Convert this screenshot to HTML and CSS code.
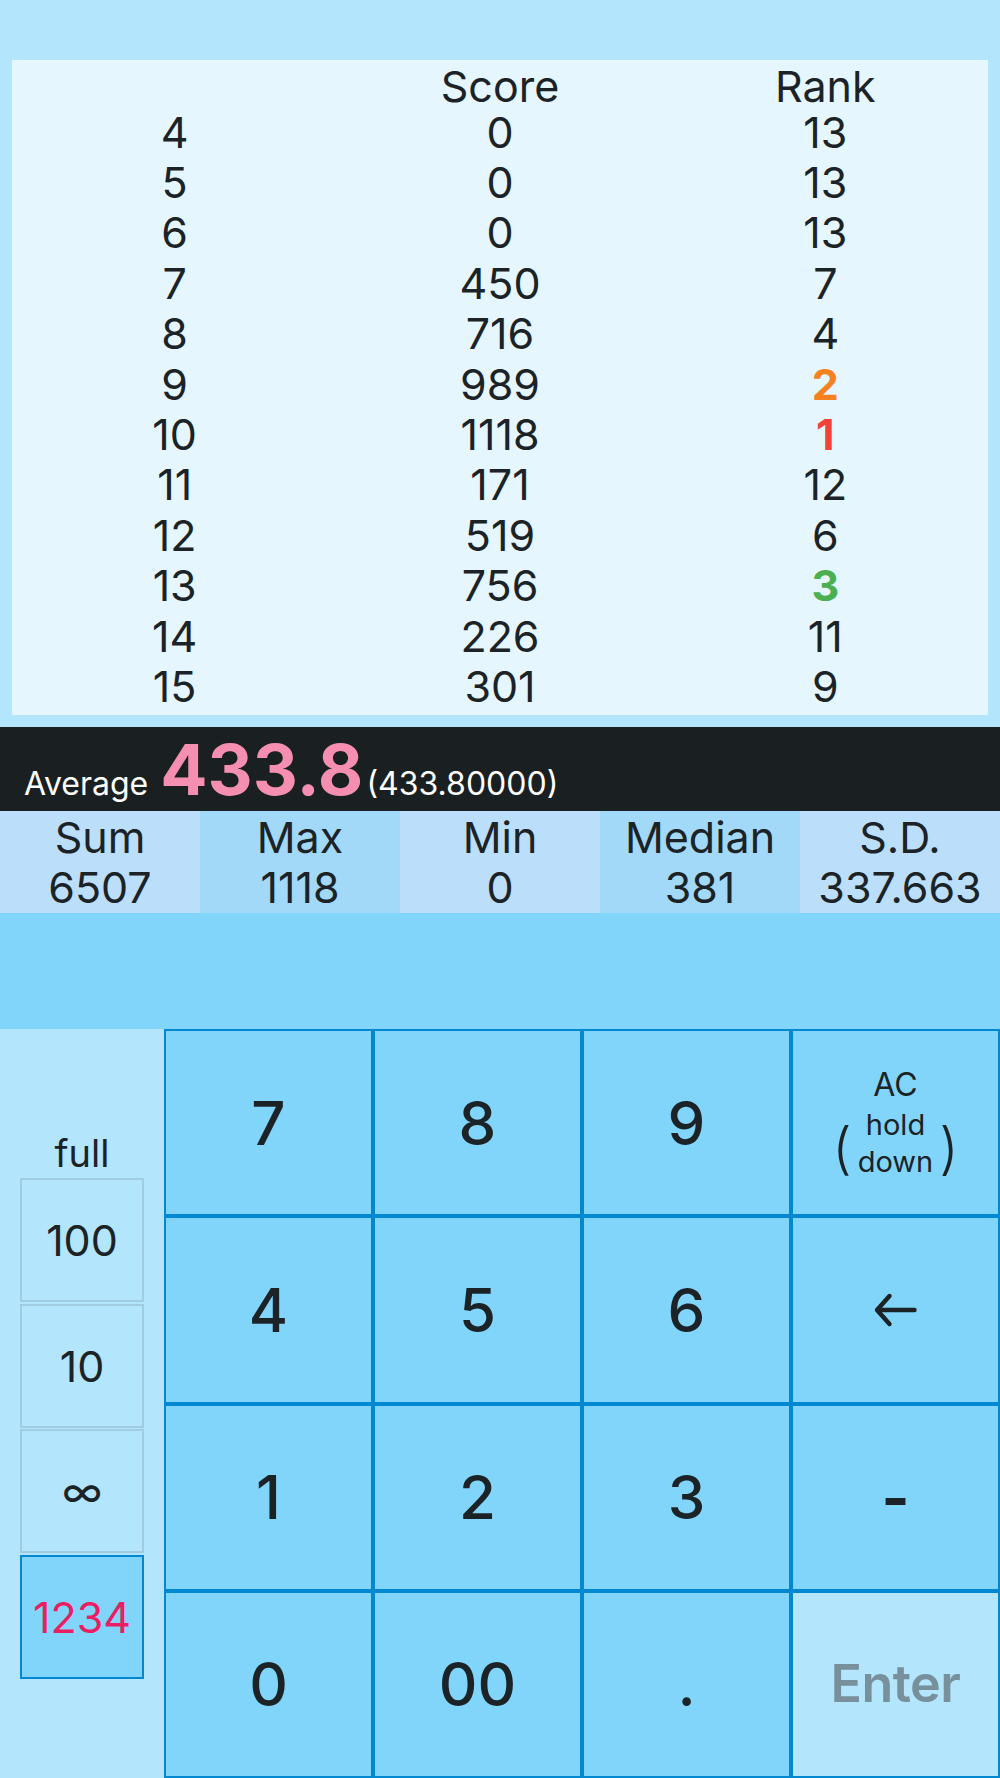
FILE: index.html
```html
<!DOCTYPE html>
<html lang="en">
<head>
    <meta charset="UTF-8">
    <meta name="viewport" content="width=device-width, initial-scale=1.0">
    <title>Score Calculator</title>
    <link rel="stylesheet" href="styles.css">
</head>
<body>
    <section class="scores">
        <div class="score-table">
            <div class="head"></div>
            <div class="head">Score</div>
            <div class="head">Rank</div>

            <div>4</div><div>0</div><div>13</div>
            <div>5</div><div>0</div><div>13</div>
            <div>6</div><div>0</div><div>13</div>
            <div>7</div><div>450</div><div>7</div>
            <div>8</div><div>716</div><div>4</div>
            <div>9</div><div>989</div><div class="rank-2">2</div>
            <div>10</div><div>1118</div><div class="rank-1">1</div>
            <div>11</div><div>171</div><div>12</div>
            <div>12</div><div>519</div><div>6</div>
            <div>13</div><div>756</div><div class="rank-3">3</div>
            <div>14</div><div>226</div><div>11</div>
            <div>15</div><div>301</div><div>9</div>
        </div>
    </section>

    <div class="average-bar">
        <span class="average-label">Average</span>
        <span class="average-value">433.8</span>
        <span class="average-exact">(433.80000)</span>
    </div>

    <div class="stats">
        <div class="stat"><div>Sum</div><div>6507</div></div>
        <div class="stat"><div>Max</div><div>1118</div></div>
        <div class="stat"><div>Min</div><div>0</div></div>
        <div class="stat"><div>Median</div><div>381</div></div>
        <div class="stat"><div>S.D.</div><div>337.663</div></div>
    </div>

    <div class="spacer"></div>

    <div class="keypad">
        <div class="side">
            <div class="side-label">full</div>
            <button class="mode">100</button>
            <button class="mode">10</button>
            <button class="mode">&infin;</button>
            <button class="mode active">1234</button>
        </div>
        <div class="keys">
            <button class="key">7</button>
            <button class="key">8</button>
            <button class="key">9</button>
            <button class="key key-ac">
                <span class="ac-top">AC</span>
                <span class="ac-row">
                    <span class="paren">(</span>
                    <span class="ac-hint">hold<br>down</span>
                    <span class="paren">)</span>
                </span>
            </button>
            <button class="key">4</button>
            <button class="key">5</button>
            <button class="key">6</button>
            <button class="key">
                <svg width="46" height="38" viewBox="0 0 46 38">
                    <path d="M41.5 19 H4 M16.5 5 L4 19 L16.5 33" fill="none" stroke="#1b2326" stroke-width="4.4" stroke-linecap="round" stroke-linejoin="round"/>
                </svg>
            </button>
            <button class="key">1</button>
            <button class="key">2</button>
            <button class="key">3</button>
            <button class="key key-minus">-</button>
            <button class="key">0</button>
            <button class="key">00</button>
            <button class="key">.</button>
            <button class="key key-enter">Enter</button>
        </div>
    </div>
</body>
</html>
```

FILE: styles.css
```css
* {
    box-sizing: border-box;
}
body {
    margin: 0;
    font-family: Inter, "Noto Sans", sans-serif;
    color: #1b2326;
    background: #81d4fa;
}
button {
    font-family: inherit;
    color: inherit;
    padding: 0;
    margin: 0;
}

/* score list */
.scores {
    background: #b3e5fc;
    padding: 60px 12px 12px;
}
.score-table {
    background: #e5f6fe;
    height: 655px;
    padding-top: 6px;
    display: grid;
    grid-template-columns: repeat(3, 1fr);
    grid-template-rows: 40.7px repeat(12, 50.4px);
    font-size: 43px;
    line-height: 50.4px;
    text-align: center;
}
.score-table .head {
    line-height: 40.7px;
}
.rank-1 { color: #f44336; font-weight: 700; }
.rank-2 { color: #f5821e; font-weight: 700; }
.rank-3 { color: #4caf50; font-weight: 700; }

/* average */
.average-bar {
    height: 84px;
    background: #1a1f21;
    color: #fff;
    display: flex;
    align-items: baseline;
    padding: 8px 24px 0;
    font-size: 32px;
    line-height: 32px;
}
.average-value {
    font-size: 70px;
    line-height: 70px;
    font-weight: 700;
    color: #f48fb1;
    margin: 0 3px 0 12px;
}

/* stats */
.stats {
    display: grid;
    grid-template-columns: repeat(5, 1fr);
    height: 102px;
    font-size: 43px;
    line-height: 50.4px;
    text-align: center;
}
.stat {
    background: #bbdefb;
    padding-top: 1px;
}
.stat:nth-child(even) {
    background: #a2d8f8;
}
.spacer {
    height: 116px;
}

/* keypad */
.keypad {
    display: flex;
    height: 749px;
}
.side {
    width: 164px;
    background: #b3e5fc;
    padding-top: 101px;
    display: flex;
    flex-direction: column;
    align-items: center;
}
.side-label {
    font-size: 38px;
    line-height: 46px;
    margin-bottom: 2px;
}
.mode {
    width: 124px;
    height: 124px;
    margin-bottom: 1.7px;
    border: 2px solid #a0cbe0;
    background: #b3e5fc;
    font-size: 43px;
    display: flex;
    align-items: center;
    justify-content: center;
}
.mode.active {
    background: #81d4fa;
    border-color: #0288d1;
    color: #e91e63;
}
.keys {
    flex: 1;
    display: grid;
    grid-template-columns: repeat(4, 1fr);
    grid-template-rows: repeat(4, 1fr);
}
.key {
    border: 2px solid #0288d1;
    background: #81d4fa;
    display: flex;
    flex-direction: column;
    align-items: center;
    justify-content: center;
    font-size: 60px;
    font-weight: 500;
    line-height: 1;
}
.key-ac {
    font-weight: 400;
}
.key-ac .ac-top {
    font-size: 32px;
    line-height: 40px;
    margin-bottom: 2px;
}
.ac-row {
    display: flex;
    align-items: center;
}
.ac-hint {
    font-size: 29px;
    line-height: 36.5px;
    margin: 0 6px;
}
.paren {
    font-size: 56px;
    font-weight: 300;
    line-height: 1;
    padding-top: 8px;
}
.key-minus {
    font-weight: 700;
}
.key-enter {
    background: #b3e5fc;
    color: #78909c;
    font-size: 52px;
    font-weight: 600;
    letter-spacing: -0.5px;
}
```
